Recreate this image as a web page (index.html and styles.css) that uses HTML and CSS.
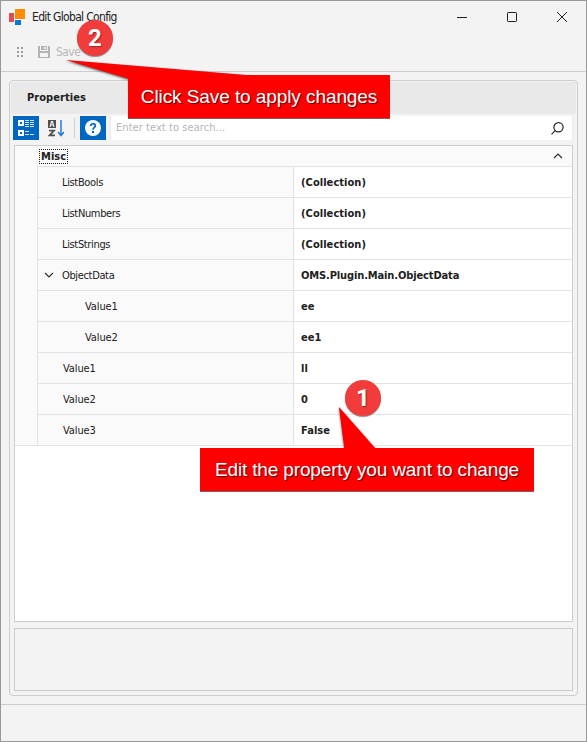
FILE: index.html
```html
<!DOCTYPE html>
<html lang="en">
<head>
<meta charset="utf-8">
<title>Edit Global Config</title>
<link rel="stylesheet" href="styles.css">
</head>
<body>
<div class="window">
  <header class="titlebar">
    <svg class="logo" width="16" height="16" viewBox="0 0 16 16"><path fill="#e74856" d="M0 4h5v9H0z"/><path fill="#ff8c00" d="M6 0h10v10H6z"/><path fill="#0078d7" d="M6 11h6v5H6z"/></svg>
    <span class="title">Edit Global Config</span>
    <svg class="controls" width="112" height="12" viewBox="0 0 112 12" fill="none" stroke="#202020"><path d="M0 6.5h10"/><rect x="50.5" y="1.500" width="9" height="9" rx=".7"/><path d="M100 1l10 10M110 1l-10 10"/></svg>
  </header>
  <div class="toolbar">
    <svg class="grip" width="6" height="10" viewBox="0 0 6 10" fill="#9c9c9c"><path d="M0 0h2v2H0zM4 0h2v2H4zM0 4h2v2H0zM4 4h2v2H4zM0 8h2v2H0zM4 8h2v2H4z"/></svg>
    <svg class="disk" width="12" height="12" viewBox="0 0 12 12" fill="#b4b4b4" fill-rule="evenodd"><path d="M0 0h2v5h8V0h1l1 1v11H0zM2 7v4h8V7z"/><path d="M3 0h6v4H3zM6 1v2h2V1z"/></svg>
    <span class="save">Save</span>
  </div>
  <main class="panel">
    <div class="tabs"><span class="tab">Properties</span></div>
    <div class="tools">
      <span class="tool active"><svg width="16" height="16" viewBox="0 0 16 16" fill="#fff" fill-rule="evenodd"><path d="M0 0h6v6H0zM2 2v2h2V2zM0 10h6v6H0zM2 12v2h2v-2z"/><path fill="#d3e5f5" d="M7 0h4v1H7zM12 0h4v1h-4zM7 2h4v1H7zM12 2h4v1h-4zM7 4h4v1H7zM12 4h4v1h-4zM7 6h4v1H7zM12 6h4v1h-4zM7 11h4v1H7zM7 14h4v1H7zM12 14h4v1h-4z"/></svg></span>
      <span class="tool sort"><svg width="16" height="17" viewBox="0 0 16 17"><path fill="#505050" fill-rule="evenodd" d="M0 0h8v8H0zM3 1L1.500 7h1l.5-1.500h2L5.500 7h1L5 1zm1 1l.7 2.500H3.300z"/><path d="M1 10.700h5L1.700 15.300H7" fill="none" stroke="#505050" stroke-width="1.700"/><path d="M13 0v15M10 12l3 3.500 3-3.500" fill="none" stroke="#2b7ccf" stroke-width="1.500"/></svg></span>
      <span class="separator"></span>
      <span class="tool active"><svg width="16" height="16" viewBox="0 0 16 16"><circle cx="8" cy="8" r="8" fill="#fff"/><path d="M5.700 6c0-3 4.700-3 4.700-.2C10.400 7.500 8 7.300 8 9.700" fill="none" stroke="#0067c0" stroke-width="1.700"/><path fill="#0067c0" d="M7 11h2v2H7z"/></svg></span>
      <div class="search"><span>Enter text to search...</span><svg width="13" height="13" viewBox="0 0 13 13" fill="none" stroke="#252525" stroke-width="1.200"><circle cx="7.500" cy="5.300" r="4.600"/><path d="M4.200 8.600L.5 12.300"/></svg></div>
    </div>
    <section class="grid">
      <div class="category"><b>Misc</b><svg width="10" height="6" viewBox="0 0 10 6" fill="none" stroke="#303030" stroke-width="1.200"><path d="M1 5l4-4 4 4"/></svg></div>
      <div class="rows">
        <div class="row"><span class="name">ListBools</span><b class="value">(Collection)</b></div>
        <div class="row"><span class="name">ListNumbers</span><b class="value">(Collection)</b></div>
        <div class="row"><span class="name">ListStrings</span><b class="value">(Collection)</b></div>
        <div class="row"><span class="name parent"><svg width="10" height="6" viewBox="0 0 10 6" fill="none" stroke="#303030" stroke-width="1.200"><path d="M1 1l4 4 4-4"/></svg>ObjectData</span><b class="value wide">OMS.Plugin.Main.ObjectData</b></div>
        <div class="row"><span class="name child">Value1</span><b class="value">ee</b></div>
        <div class="row"><span class="name child">Value2</span><b class="value">ee1</b></div>
        <div class="row"><span class="name plain">Value1</span><b class="value">ll</b></div>
        <div class="row"><span class="name plain">Value2</span><b class="value">0</b></div>
        <div class="row"><span class="name plain">Value3</span><b class="value">False</b></div>
      </div>
    </section>
    <div class="description"></div>
  </main>
  <footer class="statusbar"></footer>
</div>
<svg class="tails" width="587" height="742" viewBox="0 0 587 742" fill="red"><path d="M66 60L252 75.500V90H129V79z"/><path d="M339 407l37 42v5h-31z"/></svg>
<div class="callout apply"><span>Click Save to apply changes</span></div>
<div class="callout edit"><span>Edit the property you want to change</span></div>
<div class="badge two">2</div>
<div class="badge one">1</div>
</body>
</html>
```

FILE: styles.css
```css
* { box-sizing: border-box; }
body { margin: 0; font: 11px/14px "DejaVu Sans Condensed", "DejaVu Sans", sans-serif; font-stretch: condensed; color: #202020; white-space: nowrap; }
svg { display: block; flex: none; }
.window { width: 587px; height: 742px; border: 1px solid #999; background: #f3f3f3; display: flex; flex-direction: column; }
.titlebar { height: 32px; display: flex; align-items: center; padding-left: 8px; }
.title { margin-left: 7px; font-size: 12px; letter-spacing: -.67px; }
.controls { margin-left: auto; margin-right: 17px; }
.toolbar { height: 39px; border-bottom: 1px solid #cdcdcd; display: flex; align-items: center; padding-left: 16px; }
.disk { margin-left: 15px; }
.save { margin-left: 6px; font-size: 12px; letter-spacing: -.55px; color: #b9b9b9; }
.panel { margin: 8px 8px 0; height: 616px; border: 1px solid #cdcdcd; border-radius: 4px; padding: 1px; }
.tabs { height: 32px; background: #e9e9e9; display: flex; align-items: center; padding-left: 16px; }
.tab { font-weight: bold; letter-spacing: .05px; }
.tools { height: 24px; margin: 2px 3px 0 2px; display: flex; }
.tool { width: 26px; display: flex; align-items: center; justify-content: center; }
.active { background: #0067c0; }
.sort { margin-left: 4px; }
.separator { width: 1px; height: 20px; margin: 2px 5px 0 5px; background: #cfcfcf; }
.search { flex: 1; margin-left: 4px; padding: 0 8px 0 5px; background: #fff; border: 1px solid #ececec; border-width: 0 1px; display: flex; align-items: center; justify-content: space-between; color: #b5b5b5; letter-spacing: .06px; }
.grid { height: 477px; margin: 5px 3px 0; border: 1px solid #cdcdcd; background: #fff; }
.category { height: 20px; background: #fafafa; display: flex; align-items: center; justify-content: space-between; padding: 0 9px 0 24px; }
.category b { border: 1px dotted #202020; height: 15px; line-height: 14px; padding: 0 1px; letter-spacing: .05px; }
.rows { background: #fafafa; padding-left: 22px; border-bottom: 1px solid #e3e3e3; }
.row { height: 31px; border: 1px solid #e3e3e3; border-width: 1px 0 0 1px; display: grid; grid-template-columns: 255px 1fr; line-height: 31px; }
.name { height: 30px; padding-left: 24px; letter-spacing: -.35px; }
.parent { padding-left: 6px; display: flex; align-items: center; gap: 8px; }
.plain { padding-left: 25px; letter-spacing: -.1px; }
.child { padding-left: 47px; letter-spacing: -.1px; }
.value { height: 30px; padding-left: 7px; border-left: 1px solid #e3e3e3; background: #fff; letter-spacing: .05px; }
.wide { letter-spacing: -.12px; }
.description { height: 63px; margin: 6px 3px 0; border: 1px solid #cdcdcd; }
.statusbar { margin-top: 8px; flex: 1; border-top: 1px solid #cdcdcd; }
.tails { position: absolute; left: 0; top: 0; filter: drop-shadow(0 1px 1px #555); }
.callout { position: absolute; background: red; border-bottom: 1px solid #80605c; height: 44px; display: flex; align-items: center; justify-content: center; color: #fff; font: 19px/24px "Liberation Sans", Arial, sans-serif; text-shadow: 1px 1px 1px #500; }
.apply { left: 128px; top: 75px; width: 262px; letter-spacing: -.08px; }
.edit { left: 200px; top: 448px; width: 334px; letter-spacing: -.15px; }
.badge { position: absolute; width: 36px; height: 36px; border-radius: 50%; background: #f23c3c; box-shadow: 0 1px 1px #888; color: #fff; font: bold 24px/36px Roboto, "Liberation Sans", sans-serif; text-align: center; text-shadow: 1px 1px 1px #922; }
.two { left: 77px; top: 20px; }
.one { left: 345px; top: 380px; }
```
